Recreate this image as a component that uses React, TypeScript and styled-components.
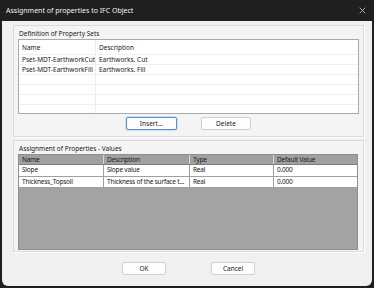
import React from 'react';
import styled, { createGlobalStyle } from 'styled-components';

const GlobalStyle = createGlobalStyle`
  html, body {
    margin: 0;
    padding: 0;
    background: #1f1f1f;
  }
  * {
    box-sizing: border-box;
  }
`;

const Window = styled.div`
  width: 374px;
  height: 288px;
  display: flex;
  flex-direction: column;
  background: #1f1f1f;
  font-family: 'Noto Sans', 'Open Sans', sans-serif;
  font-size: 6.5px;
  color: #1a1a1a;
  overflow: hidden;
`;

const TitleBar = styled.div`
  height: 21px;
  flex-shrink: 0;
  display: flex;
  align-items: center;
  justify-content: space-between;
  padding: 0 8px 0 6px;
  color: #f2f2f2;
  font-size: 7px;
`;

const CloseIcon = styled.svg`
  width: 7px;
  height: 7px;
`;

const Body = styled.div`
  flex: 1;
  margin: 0 2px 2px;
  background: #f0f0f0;
  border-radius: 0 0 6px 6px;
  padding: 4px 8px 0 11px;
  display: flex;
  flex-direction: column;
`;

const Group = styled.div<{ $height: number }>`
  height: ${({ $height }) => $height}px;
  background: #f4f4f4;
  border: 1px solid #dadada;
  box-shadow: 1px 1px 0 #ffffff;
  padding: 2px 4px 0 4px;
  display: flex;
  flex-direction: column;
  & + & {
    margin-top: 3px;
  }
`;

const GroupLabel = styled.div`
  height: 11px;
  line-height: 11px;
  padding-left: 1px;
`;

const ListBox = styled.div`
  width: 341px;
  height: 75px;
  background: #ffffff;
  border: 1px solid #a9a9a9;
  display: flex;
  flex-direction: column;
  overflow: hidden;
`;

const ListRow = styled.div<{ $height: number }>`
  height: ${({ $height }) => $height}px;
  flex-shrink: 0;
  display: grid;
  grid-template-columns: 76px 1fr;
  align-items: center;
  border-bottom: 1px solid #f0f0f0;
`;

const ListCell = styled.div`
  padding-left: 3px;
  height: 100%;
  display: flex;
  align-items: center;
  white-space: nowrap;
  overflow: hidden;
  & + & {
    border-left: 1px solid #ececec;
  }
`;

const ButtonRow = styled.div<{ $gap: number; $top: number }>`
  display: flex;
  justify-content: center;
  gap: ${({ $gap }) => $gap}px;
  margin-top: ${({ $top }) => $top}px;
`;

const Button = styled.div<{ $width: number; $focused?: boolean }>`
  width: ${({ $width }) => $width}px;
  height: 13px;
  background: #fdfdfd;
  border: 1px solid ${({ $focused }) => ($focused ? '#5a8fd0' : '#d0d0d0')};
  box-shadow: ${({ $focused }) => ($focused ? '0 0 0 1px #cfe0f4' : 'none')};
  border-radius: 2px;
  display: flex;
  align-items: center;
  justify-content: center;
`;

const Grid = styled.div`
  width: 340px;
  height: 96px;
  background: #a3a3a3;
  border: 1px solid #8f8f8f;
  display: flex;
  flex-direction: column;
`;

const GridRow = styled.div<{ $header?: boolean }>`
  height: ${({ $header }) => ($header ? 10 : 11.5)}px;
  flex-shrink: 0;
  display: grid;
  grid-template-columns: 85px 86px 84px minmax(0, 1fr);
  background: ${({ $header }) => ($header ? '#a0a0a0' : '#ffffff')};
  border-bottom: 1px solid ${({ $header }) => ($header ? '#7d7d7d' : '#a0a0a0')};
`;

const GridCell = styled.div<{ $header?: boolean }>`
  min-width: 0;
  padding: 0 1px 0 3px;
  line-height: ${({ $header }) => ($header ? 9 : 10.5)}px;
  letter-spacing: -0.2px;
  white-space: nowrap;
  overflow: hidden;
  border-right: 1px solid ${({ $header }) => ($header ? '#d8d8d8' : '#a0a0a0')};
  &:last-child {
    border-right: none;
  }
`;

const Footer = styled.div`
  flex: 1;
  display: flex;
  justify-content: center;
  align-items: flex-start;
  padding-top: 10px;
  gap: 45px;
`;

const psets = [
  ['Pset-MDT-EarthworkCut', 'Earthworks. Cut'],
  ['Pset-MDT-EarthworkFill', 'Earthworks. Fill'],
  ['', ''],
  ['', ''],
  ['', ''],
  ['', ''],
];

const props = [
  ['Slope', 'Slope value', 'Real', '0.000'],
  ['Thickness_Topsoil', 'Thickness of the surface t...', 'Real', '0.000'],
];

export default function App() {
  return (
    <>
      <GlobalStyle />
      <Window>
        <TitleBar>
          <span>Assignment of properties to IFC Object</span>
          <CloseIcon viewBox="0 0 10 10">
            <path d="M1 1 L9 9 M9 1 L1 9" stroke="#e8e8e8" strokeWidth="1" />
          </CloseIcon>
        </TitleBar>
        <Body>
          <Group $height={112}>
            <GroupLabel>Definition of Property Sets</GroupLabel>
            <ListBox>
              <ListRow $height={15}>
                <ListCell>Name</ListCell>
                <ListCell>Description</ListCell>
              </ListRow>
              {psets.map(([name, desc], i) => (
                <ListRow key={i} $height={10}>
                  <ListCell>{name}</ListCell>
                  <ListCell>{desc}</ListCell>
                </ListRow>
              ))}
            </ListBox>
            <ButtonRow $gap={24} $top={3}>
              <Button $width={51} $focused>Insert...</Button>
              <Button $width={50}>Delete</Button>
            </ButtonRow>
          </Group>
          <Group $height={112}>
            <GroupLabel>Assignment of Properties - Values</GroupLabel>
            <Grid>
              <GridRow $header>
                <GridCell $header>Name</GridCell>
                <GridCell $header>Description</GridCell>
                <GridCell $header>Type</GridCell>
                <GridCell $header>Default Value</GridCell>
              </GridRow>
              {props.map(row => (
                <GridRow key={row[0]}>
                  {row.map((v, j) => (
                    <GridCell key={j}>{v}</GridCell>
                  ))}
                </GridRow>
              ))}
            </Grid>
          </Group>
          <Footer>
            <Button $width={44}>OK</Button>
            <Button $width={44}>Cancel</Button>
          </Footer>
        </Body>
      </Window>
    </>
  );
}
